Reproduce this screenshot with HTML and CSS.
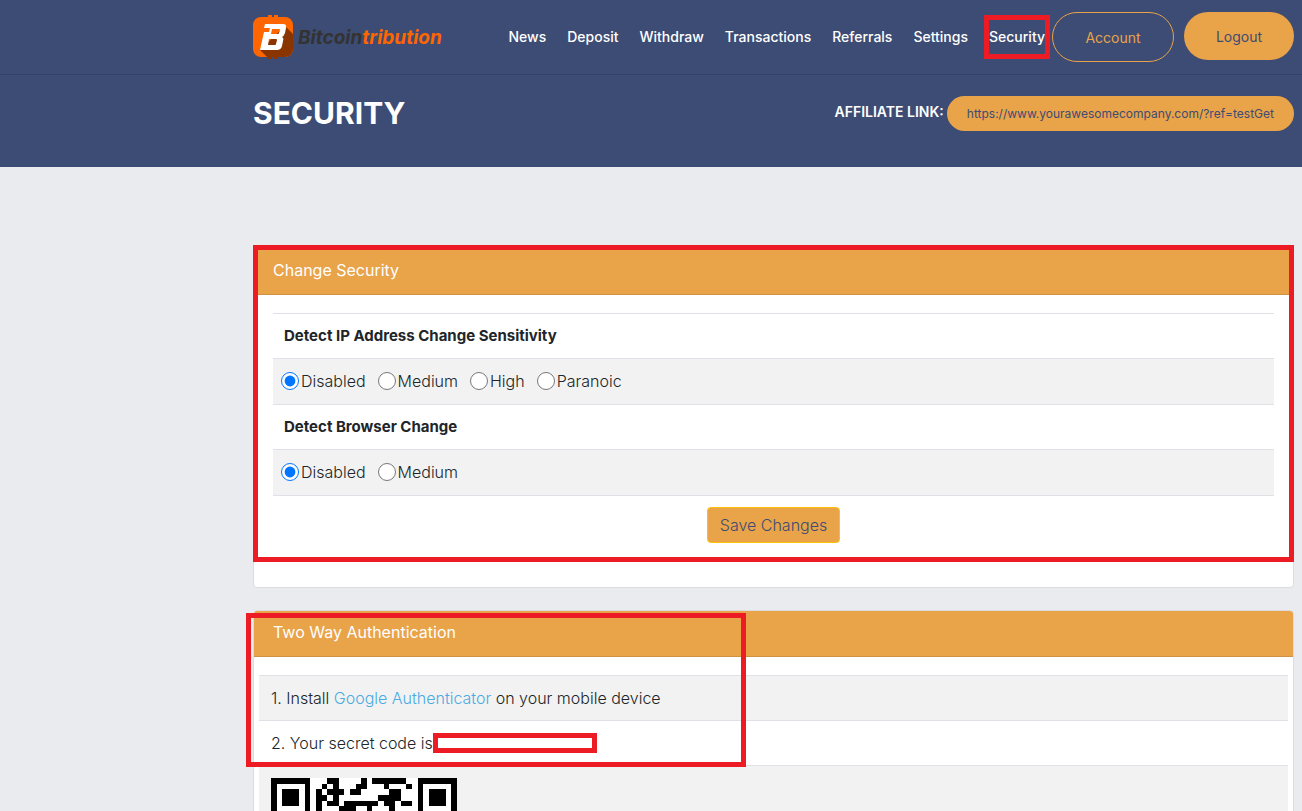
FILE: index.html
```html
<!DOCTYPE html>
<html lang="en">
<head>
    <meta charset="utf-8">
    <title>Security</title>
    <link rel="stylesheet" href="styles.css">
</head>
<body>
    <header class="header">
        <div class="navbar">
            <a class="brand" href="#" aria-label="Bitcointribution">
                <svg class="brand-icon" width="40" height="44" viewBox="0 0 40 44" aria-hidden="true">
                    <path fill="#f60" d="M15 0h4v2h2V0h4v2h7a8 8 0 0 1 8 8v24a8 8 0 0 1-8 8h-7v2h-4v-2h-2v2h-4v-2H8a8 8 0 0 1-8-8V10a8 8 0 0 1 8-8h7z"/>
                    <path fill="#8a3500" d="M32 11l8 8v15a8 8 0 0 1-8 8h-7v2h-4v-2h-2v2h-4v-2h-1l-7-7z"/>
                    <path fill="#fff" fill-rule="evenodd" d="M12 9h18q4 0 3 4l-1 5q-1 3-3 4q2 1 1 4l-1 5q-1 4-5 4H7l4-18h5l1-4h-6zM19 14l-1 5h7q1 0 1-1l1-3q0-1-1-1zM16 24l-1 6h7q1 0 1-1l1-4q0-1-1-1z"/>
                </svg>
                <span class="brand-name">Bitcoin<span>tribution</span></span>
            </a>
            <nav class="nav">
                <a href="#">News</a>
                <a href="#">Deposit</a>
                <a href="#">Withdraw</a>
                <a href="#">Transactions</a>
                <a href="#">Referrals</a>
                <a href="#">Settings</a>
                <a class="active" href="#">Security</a>
            </nav>
            <button class="pill pill-outline" type="button">Account</button>
            <button class="pill" type="button">Logout</button>
        </div>
        <div class="title-bar">
            <h1>SECURITY</h1>
            <div class="affiliate">
                <span>AFFILIATE LINK:</span>
                <button class="affiliate-link" type="button">https://www.yourawesomecompany.com/?ref=testGet</button>
            </div>
        </div>
    </header>

    <main class="content">
        <section class="card marked">
            <h2 class="card-header">Change Security</h2>
            <form class="card-body">
                <fieldset>
                    <legend>Detect IP Address Change Sensitivity</legend>
                    <div class="options">
                        <label><input type="radio" name="ip" checked>Disabled</label>
                        <label><input type="radio" name="ip">Medium</label>
                        <label><input type="radio" name="ip">High</label>
                        <label><input type="radio" name="ip">Paranoic</label>
                    </div>
                </fieldset>
                <fieldset>
                    <legend>Detect Browser Change</legend>
                    <div class="options">
                        <label><input type="radio" name="browser" checked>Disabled</label>
                        <label><input type="radio" name="browser">Medium</label>
                    </div>
                </fieldset>
                <button class="save" type="button">Save Changes</button>
            </form>
        </section>

        <section class="card">
            <h2 class="card-header">Two Way Authentication</h2>
            <div class="steps">
                <p class="step">1. Install <a href="#">Google Authenticator</a> on your mobile device</p>
                <p class="step">2. Your secret code is<span class="secret"></span></p>
                <div class="step step-qr">
                    <svg class="qr" viewBox="0 0 33 33" shape-rendering="crispEdges" role="img" aria-label="QR code">
                        <path fill="#fff" d="M0 0h33v33H0z"/>
                        <path fill-rule="evenodd" d="M0 0h7v7H0zM1 1v5h5V1zM2 2h3v3H2zM26 0h7v7h-7zM27 1v5h5V1zM28 2h3v3h-3z"/>
                        <path d="M10 0h2v1h-2zM16 0h1v1h-1zM18 0h6v1h-6zM9 1h1v1H9zM11 1h1v1h-1zM15 1h2v1h-2zM20 1h1v1h-1zM24 1h1v1h-1zM8 2h1v1H8zM10 2h3v1h-3zM14 2h2v1h-2zM21 2h2v1h-2zM8 3h2v1H8zM11 3h1v1h-1zM19 3h4v1h-4zM8 4h1v1H8zM10 4h2v1h-2zM13 4h6v1h-6zM20 4h2v1h-2zM23 4h2v1h-2zM8 5h1v1H8zM12 5h3v1h-3zM17 5h1v1h-1zM21 5h1v1h-1z"/>
                    </svg>
                </div>
            </div>
            <div class="mark" aria-hidden="true"></div>
        </section>
    </main>
</body>
</html>
```
FILE: styles.css
```css
* {
    box-sizing: border-box;
}

body {
    margin: 0;
    height: 100vh;
    overflow: hidden;
    background: #e9ebee;
    color: #212529;
    font-family: Inter, "Open Sans", sans-serif;
    font-size: 16px;
    font-weight: 300;
    line-height: 24px;
}

h1, h2, p {
    margin: 0;
}

a {
    color: #4aabe2;
    text-decoration: none;
}

button {
    font-family: inherit;
    cursor: pointer;
}

.header {
    background: #3d4c74;
    color: #fff;
}

.navbar {
    display: flex;
    align-items: flex-start;
    height: 75px;
    padding: 12px 8px 0 253px;
    border-bottom: 1px solid #344268;
}

.brand {
    display: flex;
    gap: 5px;
    padding-top: 3px;
}

.brand-name {
    padding-top: 11px;
    color: #333;
    font-size: 19px;
    font-weight: 700;
    font-style: italic;
}

.brand-name span {
    color: #f60;
}

.nav {
    display: flex;
    flex: 1;
    justify-content: flex-end;
    gap: 11px;
    padding: 3px 2px 0 0;
}

.nav a {
    padding: 4px 0;
    border: 5px solid transparent;
    color: #fff;
    font-size: 14px;
    font-weight: 500;
    line-height: 26px;
}

.nav .active {
    border-color: #ed1c24;
}

.pill {
    width: 110px;
    height: 48px;
    border: 0;
    border-radius: 24px;
    background: #e9a349;
    color: #3d4c74;
    font-size: 14px;
}

.pill-outline {
    width: 122px;
    height: 50px;
    margin-right: 10px;
    border: 1px solid #e9a349;
    border-radius: 25px;
    background: none;
    color: #e9a349;
}

.title-bar {
    display: flex;
    justify-content: space-between;
    height: 92px;
    padding: 21px 8px 0 253px;
}

h1 {
    font-size: 30px;
    line-height: 34px;
}

.affiliate {
    display: flex;
    align-items: flex-start;
    gap: 3px;
    font-size: 14px;
    font-weight: 600;
    line-height: 32px;
}

.affiliate-link {
    height: 35px;
    padding: 0 20px;
    border: 0;
    border-radius: 18px;
    background: #e9a349;
    color: #3d4c74;
    font-size: 12px;
}

.content {
    padding: 81px 8px 0 253px;
}

.card {
    position: relative;
    margin-bottom: 22px;
    border: 1px solid #dadce0;
    border-radius: 4px;
    background: #fff;
}

.card-header {
    height: 46px;
    padding: 9px 19px;
    border-bottom: 1px solid #cf9143;
    border-radius: 3px 3px 0 0;
    background: #e9a349;
    color: #fff;
    font-size: 16px;
    font-weight: 400;
}

.card-body {
    padding: 18px 19px 44px;
}

/* highlight around the form */
.marked::after {
    content: "";
    position: absolute;
    inset: -4px -1px 25px;
    border: 5px solid #ed1c24;
    pointer-events: none;
}

fieldset {
    margin: 0;
    padding: 0;
    border: 0;
    border-top: 1px solid #dee2e6;
}

legend {
    float: left;
    width: 100%;
    padding: 10px 11px;
    font-size: 15px;
    font-weight: 700;
}

.options {
    clear: both;
    display: flex;
    gap: 12px;
    height: 46px;
    padding: 0 8px 2px;
    border-top: 1px solid #dee2e6;
    background: #f2f2f2;
}

.options label {
    display: flex;
    align-items: center;
    gap: 2px;
}

input[type="radio"] {
    width: 18px;
    height: 18px;
    margin: 0;
}

.save {
    display: block;
    height: 36px;
    margin: 0 auto;
    padding: 0 12px;
    border: 1px solid #ffc107;
    border-radius: 4px;
    background: #e9a349;
    color: #3d4c74;
    font-size: 16px;
    font-weight: 300;
}

.card-body fieldset:last-of-type {
    margin-bottom: 11px;
    border-bottom: 1px solid #dee2e6;
}

.steps {
    padding: 18px 5px;
}

.step {
    padding: 10px 12px;
    border-top: 1px solid #dee2e6;
}

.step:nth-child(odd) {
    background: #f2f2f2;
}

.step-qr {
    padding: 12px;
}

.secret {
    display: inline-block;
    width: 164px;
    height: 20px;
    border: 5px solid #ed1c24;
    vertical-align: text-top;
}

.qr {
    display: block;
    width: 186px;
    height: 186px;
}

.mark {
    position: absolute;
    top: 2px;
    left: -8px;
    width: 500px;
    height: 154px;
    border: 5px solid #ed1c24;
    pointer-events: none;
}
```
